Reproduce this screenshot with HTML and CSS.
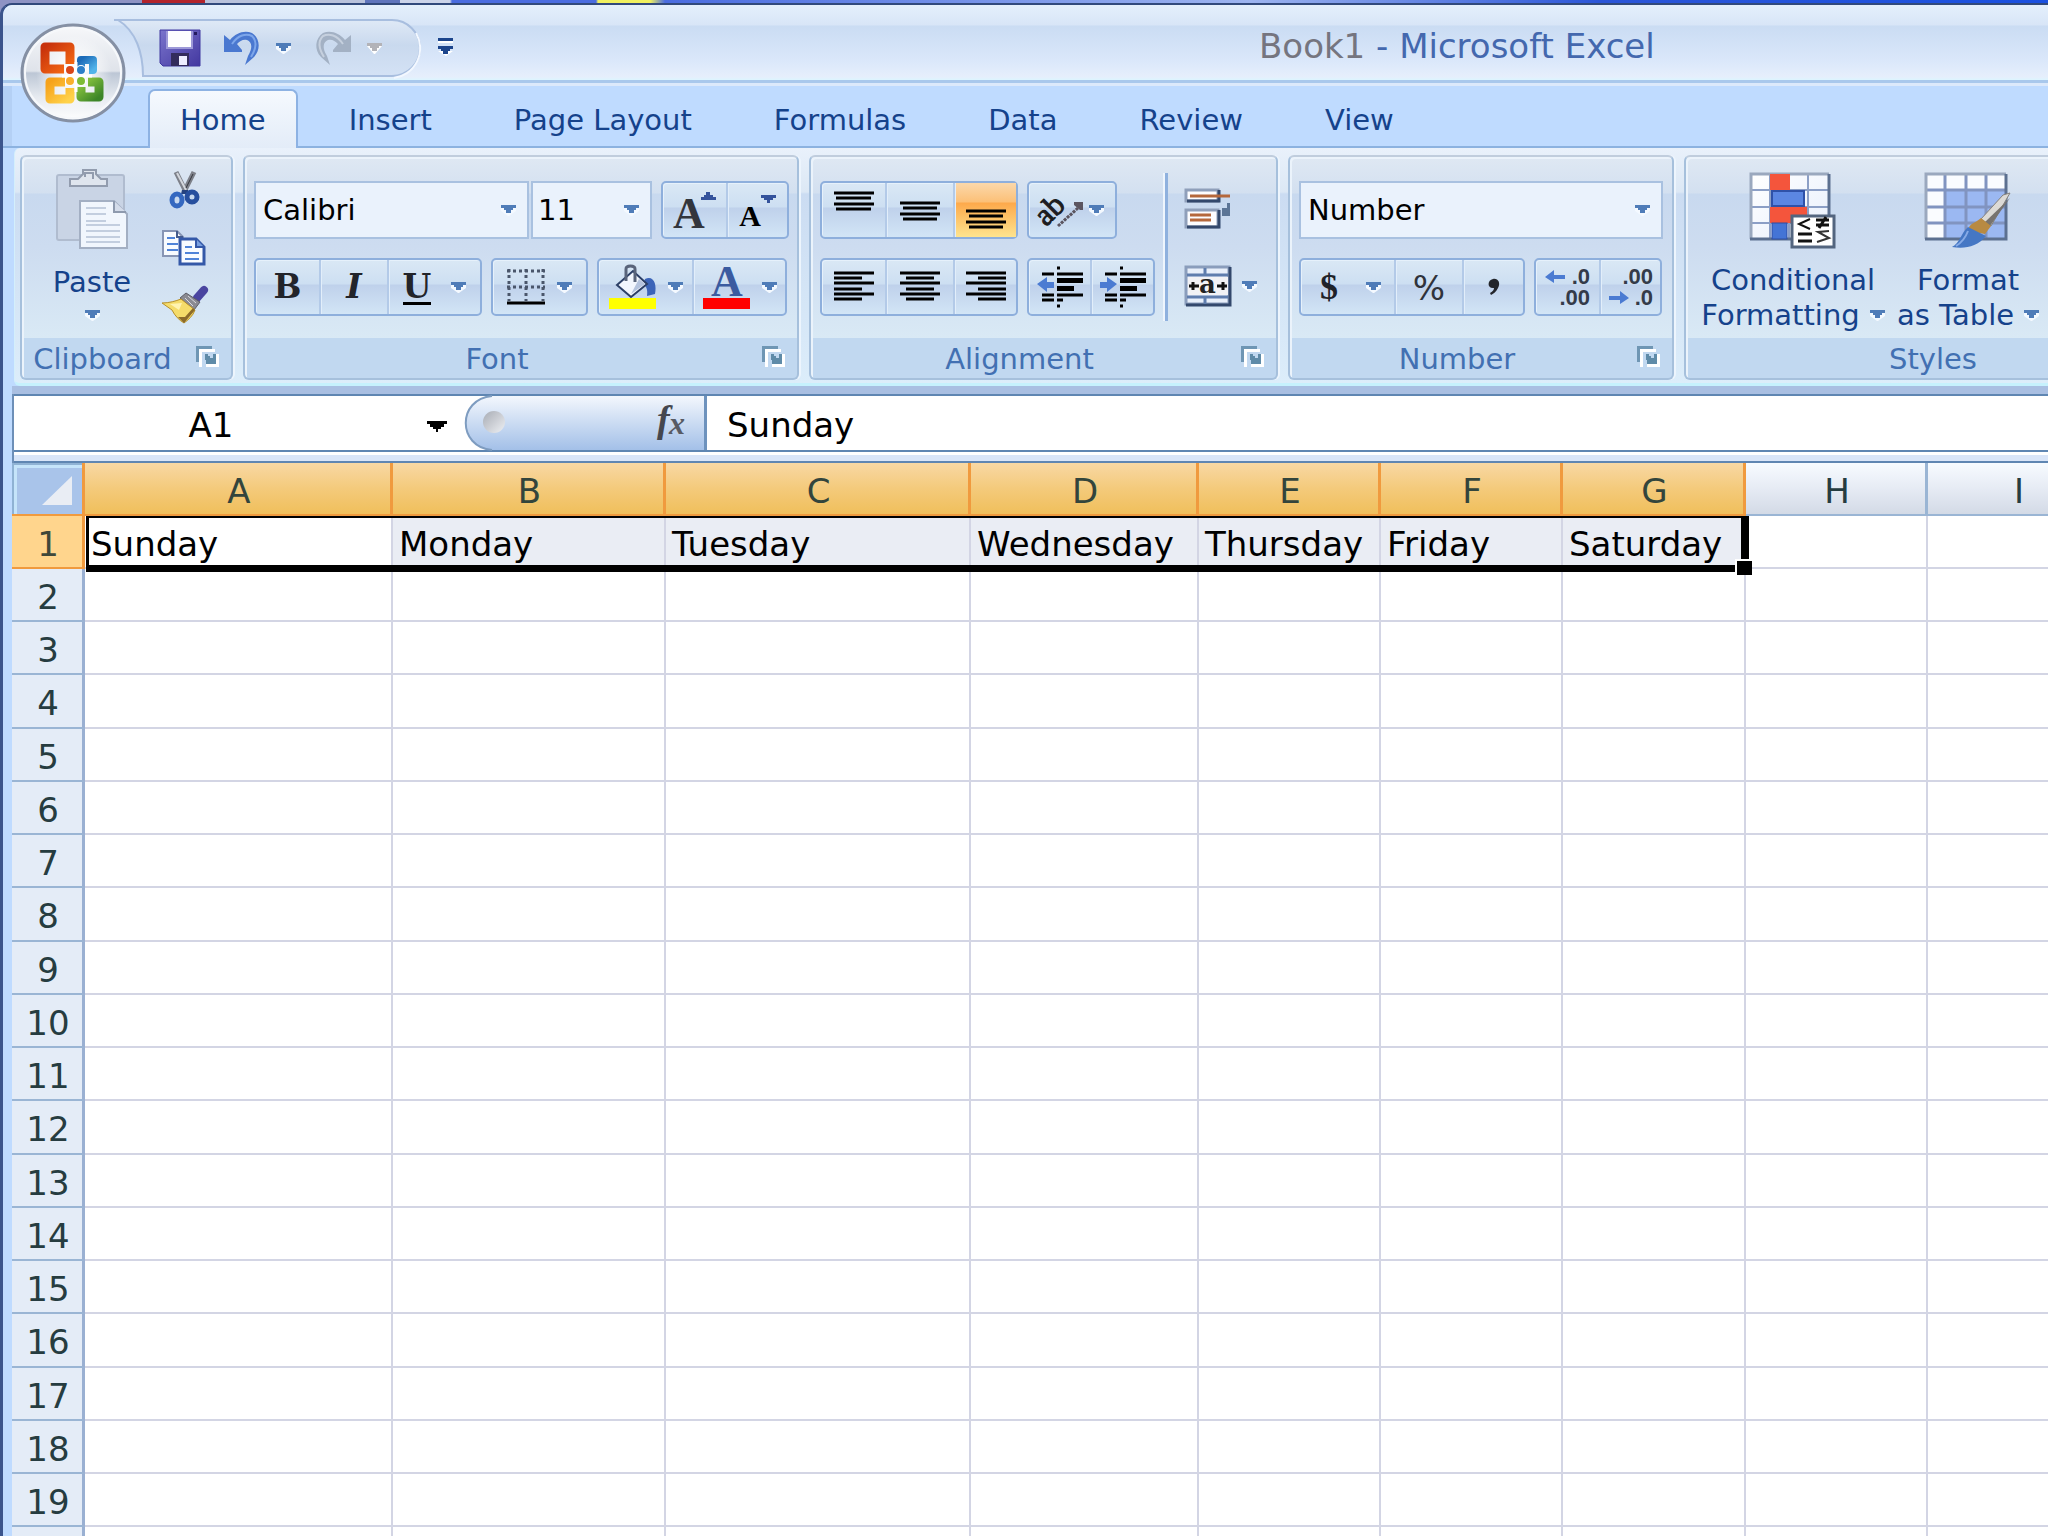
FILE: index.html
```html
<!DOCTYPE html>
<html lang="en">
<head>
<meta charset="utf-8">
<title>Book1 - Microsoft Excel</title>
<link rel="stylesheet" href="styles.css">
</head>
<body>
<svg class="defs" aria-hidden="true">
  <symbol id="caret" viewBox="0 0 15 11"><path d="M0 3H15V6L8 11H7L0 6Z" fill="#f4f9ff"/><path d="M0 0H15V3H12V5H10V8H5V5H3V3H0Z" fill="#4f7cb8"/></symbol>
  <symbol id="launcher" viewBox="0 0 23 21"><path d="M3 21V3H19V6H6V21Z" fill="#fff"/><path d="M0 0H16V3H3V16H0Z" fill="#6f96b4"/><path d="M20 8H23V21H10V18H20Z" fill="#fff"/><path d="M9 8H12V10H14V12H17V8H20V18H10V14H9Z" fill="#5f8ba8"/></symbol>
  <linearGradient id="orb" x2="0" y2="1"><stop offset="0" stop-color="#f7f8fa"/><stop offset=".48" stop-color="#dfe3ea"/><stop offset=".5" stop-color="#bcc6d5"/><stop offset=".75" stop-color="#e6eaf0"/><stop offset="1" stop-color="#fff"/></linearGradient>
  <radialGradient id="glow"><stop offset="0" stop-color="#fff"/><stop offset=".5" stop-color="#fff" stop-opacity=".7"/><stop offset="1" stop-color="#fff" stop-opacity="0"/></radialGradient>
  <linearGradient id="redG" x2="1" y2="1"><stop offset="0" stop-color="#c8320c"/><stop offset="1" stop-color="#f56a14"/></linearGradient>
  <linearGradient id="blueG" x2="1" y2="1"><stop offset="0" stop-color="#1c6bb8"/><stop offset="1" stop-color="#52b4ea"/></linearGradient>
  <linearGradient id="yelG" x2="1" y2="1"><stop offset="0" stop-color="#f6a21a"/><stop offset="1" stop-color="#ffd24a"/></linearGradient>
  <linearGradient id="greenG" x2="1" y2="1"><stop offset="0" stop-color="#8cc63f"/><stop offset="1" stop-color="#3c8527"/></linearGradient>
  <linearGradient id="qatG" x2="0" y2="1"><stop offset="0" stop-color="#dfe9f6"/><stop offset=".45" stop-color="#c9d9ee"/><stop offset="1" stop-color="#d4e2f5"/></linearGradient>
  <linearGradient id="saveG" x2="1" y2="1"><stop offset="0" stop-color="#7a74cc"/><stop offset="1" stop-color="#4338a0"/></linearGradient>
  <linearGradient id="cellG" x2="1" y2="1"><stop offset="0" stop-color="#fff"/><stop offset="1" stop-color="#e8effc"/></linearGradient>
  <linearGradient id="fxG" x2="0" y2="1"><stop offset="0" stop-color="#f3f7fd"/><stop offset="1" stop-color="#a3c0e8"/></linearGradient>
  <linearGradient id="knobG" x2="1" y2="1"><stop offset="0" stop-color="#a8acb4"/><stop offset="1" stop-color="#eef0f4"/></linearGradient>
</svg>

<div class="window">
  <header class="titlebar">
    <button class="office" aria-label="Office Button">
      <svg width="106" height="102" viewBox="0 0 106 102">
        <ellipse cx="53" cy="51" rx="51" ry="48" fill="url(#orb)" stroke="#8590a4" stroke-width="3"/>
        <ellipse cx="53" cy="51" rx="48" ry="45" fill="none" stroke="#f6f8fb" stroke-width="2"/>
        <circle cx="54" cy="52" r="38" fill="url(#glow)"/>
        <g fill="none" stroke-width="9" stroke-linejoin="round">
          <path d="M44 47H25V25H50V42" stroke="url(#redG)"/>
          <path d="M61 47V38H73V48H69" stroke="url(#blueG)" stroke-width="8"/>
          <path d="M50 66V77H30V60H45" stroke="url(#yelG)"/>
          <path d="M61 65V75H79V60H68" stroke="url(#greenG)"/>
        </g>
        <path d="M56 40V70M42 54H72" stroke="#fff" stroke-width="3"/>
        <circle cx="50" cy="48" r="5" fill="#fff"/><circle cx="61" cy="48" r="5" fill="#fff"/><circle cx="50" cy="59" r="5" fill="#fff"/><circle cx="61" cy="59" r="5" fill="#fff"/>
        <circle cx="50" cy="48" r="4" fill="#d8471a"/><circle cx="61" cy="48" r="4" fill="#2c7fc8"/><circle cx="50" cy="59" r="4" fill="#f9b02c"/><circle cx="61" cy="59" r="4" fill="#7dbb36"/>
      </svg>
    </button>
    <div class="qat">
      <svg class="qat-shape" width="308" height="60" viewBox="0 0 308 60"><path d="M2 1H280A28 28 0 0 1 280 57H31C31 34 24 12 6 1Z" fill="url(#qatG)" stroke="#a8bedf" stroke-width="2"/><path d="M282 59A30 30 0 0 0 304 14" fill="none" stroke="#f3f8ff" stroke-width="2"/></svg>
      <button aria-label="Save"><svg width="40" height="38" viewBox="0 0 40 38"><path d="M0 1H40V37H3L0 34Z" fill="url(#saveG)" stroke="#4038a0"/><rect x="6" y="2" width="27" height="18" fill="#9c98d8"/><rect x="8" y="2" width="23" height="16" fill="#fdfdff"/><rect x="11" y="24" width="18" height="13" fill="#332c5c"/><rect x="19" y="27" width="8" height="9" fill="#eef"/><rect x="34" y="3" width="3" height="3" fill="#241c60"/></svg></button>
      <button class="undo" aria-label="Undo"><svg width="36" height="34" viewBox="0 0 36 34"><path d="M0 4L6 9C12 2 20 -1 28 2C36 7 37 19 30 26L21 34L24 25C29 17 28 11 23 9C19 8 16 10 13 13L18 19V21H0Z" fill="#4a78d0"/><path d="M8 13C14 4 22 2 28 5C33 10 32 18 27 26" stroke="#7da6ea" stroke-width="2" fill="none"/></svg><svg width="15" height="11"><use href="#caret"/></svg></button>
      <button class="redo" aria-label="Redo"><svg width="36" height="34" viewBox="0 0 36 34"><path d="M36 4L30 9C24 2 16 -1 8 2C0 7 -1 19 6 26L15 34L12 25C7 17 8 11 13 9C17 8 20 10 23 13L18 19V21H36Z" fill="#a3b1c4"/><path d="M28 13C22 4 14 2 8 5C3 10 4 18 9 26" stroke="#c6d0de" stroke-width="2" fill="none"/></svg><svg width="15" height="11" viewBox="0 0 15 11"><path d="M0 3H15L8 11H7Z" fill="#fff"/><path d="M0 0H15V3H12V5H10V8H5V5H3V3H0Z" fill="#b3b3b8"/></svg></button>
    </div>
    <button class="customize" aria-label="Customize Quick Access Toolbar"><svg width="15" height="18" viewBox="0 0 15 18"><path d="M0 3H15V5H0ZM0 13H15L8 18Z" fill="#fff"/><path d="M0 0H15V3H0ZM0 8H15V11H12V13H10V16H5V13H3V11H0Z" fill="#1c458c"/></svg></button>
    <h1 class="title"><span>Book1</span> - Microsoft Excel</h1>
  </header>

  <nav class="tabs">
    <a href="#home" class="tab active">Home</a>
    <a href="#insert" class="tab">Insert</a>
    <a href="#layout" class="tab">Page Layout</a>
    <a href="#formulas" class="tab">Formulas</a>
    <a href="#data" class="tab">Data</a>
    <a href="#review" class="tab">Review</a>
    <a href="#view" class="tab">View</a>
  </nav>

  <div class="ribbon">
    <section class="group clipboard">
      <div class="body">
        <button class="big paste">
          <svg width="75" height="82" viewBox="0 0 75 82"><rect x="2" y="6" width="67" height="65" rx="2" fill="#c9d4e5" stroke="#b0bccf" stroke-width="2"/><path d="M15 10H23L28 5V1H41V5L46 10H52V17H15Z" fill="#dfe5ee" stroke="#929cae" stroke-width="2"/><path d="M30 8V4H38V10" fill="none" stroke="#929cae" stroke-width="2"/><path d="M25 32H59L72 45V79H25Z" fill="#f1f6fd" stroke="#a3afc3" stroke-width="2"/><path d="M59 32V43H71" fill="#d4dcea" stroke="#8e9aae" stroke-width="2"/><path d="M31 39H51M31 45H51M31 52H51M31 56H65M31 62H65M31 68H65M31 73H65" stroke="#c3cedf" stroke-width="2"/></svg>
          <span>Paste</span>
          <svg width="15" height="11"><use href="#caret"/></svg>
        </button>
        <div class="clip-tools">
          <button aria-label="Cut"><svg width="46" height="40" viewBox="0 0 46 40"><path d="M14 2L24 22M32 2L22 22" stroke="#7d8089" stroke-width="5"/><path d="M15 3L24 20" stroke="#d3d6dc" stroke-width="2"/><path d="M31 4L24 18" stroke="#34363c" stroke-width="1"/><path d="M20 20H26L27 24H19Z" fill="#25427f"/><ellipse cx="15" cy="30" rx="5" ry="6" fill="none" stroke="#3568c0" stroke-width="5"/><ellipse cx="30" cy="27" rx="5" ry="5" fill="none" stroke="#274f9e" stroke-width="5"/></svg></button>
          <button aria-label="Copy"><svg width="44" height="36" viewBox="0 0 44 36"><path d="M1 1H15L21 7V26H1Z" fill="#f8fbff" stroke="#8795b5" stroke-width="2"/><path d="M15 1V7H21" fill="none" stroke="#445b8c" stroke-width="2"/><path d="M5 8H13M5 14H16M5 20H16" stroke="#4f83d8" stroke-width="2"/><path d="M18 9H34L42 17V34H18Z" fill="#f8fbff" stroke="#3458a8" stroke-width="3"/><path d="M34 9V17H42" fill="#7aa0e0" stroke="#3458a8" stroke-width="2"/><path d="M23 17H30M23 23H37M23 29H37" stroke="#4f83d8" stroke-width="2"/></svg></button>
          <button aria-label="Format Painter"><svg width="46" height="38" viewBox="0 0 46 38"><path d="M35 12L42 4" stroke="#4a45a0" stroke-width="8" stroke-linecap="round"/><path d="M24 7L38 16L32 24L18 12Z" fill="#8a8a92" stroke="#5d5d66"/><path d="M26 10L34 17M23 12L31 20" stroke="#d9d9de"/><path d="M19 13L33 24C31 30 26 34 22 37C17 34 13 30 10 24L0 17C7 17 14 15 19 13Z" fill="#f5dc6a" stroke="#b78f28" stroke-width="1"/><path d="M16 31L22 37L33 24L31 22L23 31Z" fill="#8c6b2a"/><path d="M8 18L20 17L17 24Z" fill="#fff3b0"/></svg></button>
        </div>
      </div>
      <footer><span>Clipboard</span><button aria-label="Clipboard options"><svg width="23" height="21"><use href="#launcher"/></svg></button></footer>
    </section>

    <section class="group font">
      <div class="body rows">
        <div class="row">
          <div class="combos">
            <label class="combo family"><select aria-label="Font"><option>Calibri</option></select><svg width="15" height="11"><use href="#caret"/></svg></label>
            <label class="combo size"><select aria-label="Font size"><option>11</option></select><svg width="15" height="11"><use href="#caret"/></svg></label>
          </div>
          <div class="btns">
            <button class="m glyph-a" aria-label="Grow Font">A<svg width="15" height="8" viewBox="0 0 15 8"><path d="M0 8V5H3V3H5V0H9V3H12V5H15V8Z" fill="#34539c"/></svg></button>
            <button class="s glyph-a small" aria-label="Shrink Font">A<svg width="15" height="8" viewBox="0 0 15 8"><path d="M0 0H15V3H12V5H9V8H6V5H3V3H0Z" fill="#34539c"/></svg></button>
          </div>
        </div>
        <div class="row">
          <div class="btns">
            <button class="m glyph">B</button><button class="l glyph italic">I</button><button class="xl glyph"><u>U</u><svg width="15" height="11"><use href="#caret"/></svg></button>
          </div>
          <div class="btns">
            <button class="xl" aria-label="Borders"><svg width="38" height="36" viewBox="0 0 38 36"><path d="M0 2H38M0 18H38" stroke="#4a566b" stroke-width="3" stroke-dasharray="3 3"/><path d="M2 0V32M19 0V32M36 0V32" stroke="#4a566b" stroke-width="3" stroke-dasharray="3 3"/><path d="M0 34H38" stroke="#000" stroke-width="3"/></svg><svg width="15" height="11"><use href="#caret"/></svg></button>
          </div>
          <div class="btns">
            <button class="xl" aria-label="Fill Color"><svg width="47" height="44" viewBox="0 0 47 44"><rect y="33" width="47" height="11" fill="#ff0"/><path d="M36 14C45 10 48 20 46 29L38 31C39 24 37 20 34 20Z" fill="#3c64b8"/><path d="M8 20L24 6L38 19L22 32Z" fill="#f2f6fd" stroke="#2c3f66" stroke-width="2"/><path d="M22 29L36 19L30 14Z" fill="#b5c4de"/><path d="M17 16V4C17 0 26 0 26 4V17" fill="none" stroke="#59647a" stroke-width="3"/></svg><svg width="15" height="11"><use href="#caret"/></svg></button>
            <button class="xl" aria-label="Font Color"><svg width="47" height="44" viewBox="0 0 47 44"><text x="8" y="31" class="svg-a">A</text><rect y="33" width="47" height="11" fill="#f00"/></svg><svg width="15" height="11"><use href="#caret"/></svg></button>
          </div>
        </div>
      </div>
      <footer><span>Font</span><button aria-label="Font options"><svg width="23" height="21"><use href="#launcher"/></svg></button></footer>
    </section>

    <section class="group alignment">
      <div class="body">
        <div class="rows">
          <div class="row">
            <div class="btns">
              <button class="m" aria-label="Top Align"><svg width="40" height="40"><path d="M0 3H40M2 8H37M0 14H40M2 19H37"/></svg></button><button class="l" aria-label="Middle Align"><svg width="40" height="40"><path d="M0 13H40M3 18H37M0 24H40M3 29H37"/></svg></button><button class="m on" aria-label="Bottom Align"><svg width="40" height="40"><path d="M0 21H40M3 26H37M0 32H40M3 37H37"/></svg></button>
            </div>
            <div class="btns">
              <button class="orient" aria-label="Orientation"><svg width="44" height="38" viewBox="0 0 44 38"><text x="-4" y="28" transform="rotate(-45 11 20)" class="svg-ab">ab</text><path d="M18 35L38 17" stroke="#5b5560" stroke-width="3" stroke-dasharray="3 1"/><path d="M34 11H43V19H40L34 14Z" fill="#5b5560"/></svg><svg width="15" height="11"><use href="#caret"/></svg></button>
            </div>
          </div>
          <div class="row">
            <div class="btns">
              <button class="m" aria-label="Align Left"><svg width="40" height="40"><path d="M0 6H40M0 11H28M0 16H40M0 22H28M0 27H40M0 32H28"/></svg></button><button class="l" aria-label="Center"><svg width="40" height="40"><path d="M0 6H40M6 11H34M0 16H40M6 22H34M0 27H40M6 32H34"/></svg></button><button class="m" aria-label="Align Right"><svg width="40" height="40"><path d="M0 6H40M12 11H40M0 16H40M12 22H40M0 27H40M12 32H40"/></svg></button>
            </div>
            <div class="btns">
              <button class="s" aria-label="Decrease Indent"><svg width="46" height="42" viewBox="0 0 46 42"><path d="M20 2H23M5 8H17M20 8H46M5 29H17M20 29H46M5 34H17M20 34H26M20 40H23"/><path d="M20 12H46V17H20ZM20 20H37V25H20Z" fill="#000" stroke="none"/><path d="M0 18L10 11V16H17V22H10V26Z" fill="#4b7bd2" stroke="none"/></svg></button><button class="m" aria-label="Increase Indent"><svg width="46" height="42" viewBox="0 0 46 42"><path d="M20 2H23M5 8H17M20 8H46M5 29H17M20 29H46M5 34H17M20 34H26M20 40H23"/><path d="M20 12H46V17H20ZM20 20H37V25H20Z" fill="#000" stroke="none"/><path d="M17 18L7 11V16H0V22H7V26Z" fill="#4b7bd2" stroke="none"/></svg></button>
            </div>
          </div>
        </div>
        <div class="cells-tools">
          <button aria-label="Wrap Text"><svg width="46" height="40" viewBox="0 0 46 40"><path d="M1 1H33V12H1Z" fill="#fdfdff" stroke="#8f9fba" stroke-width="3"/><path d="M2 12H34V1" fill="none" stroke="#33486c" stroke-width="3"/><path d="M5 7H45" stroke="#b5683c" stroke-width="3"/><path d="M1 21H33V38H1Z" fill="#fdfdff" stroke="#8f9fba" stroke-width="3"/><path d="M2 38H34V21" fill="none" stroke="#33486c" stroke-width="3"/><path d="M5 26H26M5 31H26" stroke="#b5683c" stroke-width="3"/><path d="M42 14H45V27H37V19H42Z" fill="#5c7596"/></svg></button>
          <button aria-label="Merge and Center"><svg width="46" height="40" viewBox="0 0 46 40"><path d="M1 1H44V38H1Z" fill="#e8effa" stroke="#8a9dbc" stroke-width="3"/><path d="M1 39H45V1" fill="none" stroke="#33486c" stroke-width="3"/><path d="M2 9H43M2 31H43M20 2V9M20 31V38" stroke="#5f7dad" stroke-width="3"/><path d="M3 11H43V29H3Z" fill="#f2f2f5"/><path d="M4 20H14M8 16V24M32 20H42M38 16V24" stroke="#111" stroke-width="3"/><text x="14" y="27" class="svg-merge">a</text></svg><svg width="15" height="11"><use href="#caret"/></svg></button>
        </div>
      </div>
      <footer><span>Alignment</span><button aria-label="Alignment options"><svg width="23" height="21"><use href="#launcher"/></svg></button></footer>
    </section>

    <section class="group number">
      <div class="body rows">
        <div class="row"><label class="combo format"><select aria-label="Number format"><option>Number</option></select><svg width="15" height="11"><use href="#caret"/></svg></label></div>
        <div class="row">
          <div class="btns">
            <button class="xl dollar">$<svg width="15" height="11"><use href="#caret"/></svg></button><button class="l percent">%</button><button class="s" aria-label="Comma Style"><svg width="12" height="18" viewBox="0 0 12 18"><path d="M5 1C10 0 13 5 10 10C8 14 5 16 3 17L2 15C5 13 6 12 6 10C-1 11 -1 2 5 1Z" fill="#23252b"/></svg></button>
          </div>
          <div class="btns">
            <button class="m" aria-label="Increase Decimal"><svg width="46" height="48" viewBox="0 0 46 48"><path d="M0 14L9 7V12H20V16H9V20Z" fill="#4b7bd2"/><text x="45" y="21" class="svg-dec">.0</text><text x="45" y="42" class="svg-dec">.00</text></svg></button><button class="s" aria-label="Decrease Decimal"><svg width="46" height="48" viewBox="0 0 46 48"><path d="M21 35L12 28V33H1V37H12V41Z" fill="#4b7bd2"/><text x="45" y="21" class="svg-dec">.00</text><text x="45" y="42" class="svg-dec">.0</text></svg></button>
          </div>
        </div>
      </div>
      <footer><span>Number</span><button aria-label="Number options"><svg width="23" height="21"><use href="#launcher"/></svg></button></footer>
    </section>

    <section class="group styles">
      <div class="body">
        <button class="big cond">
          <svg width="86" height="76" viewBox="0 0 86 76"><rect x="1" y="1" width="77" height="65" fill="url(#cellG)"/><path d="M0 17H79M0 34H79M0 50H79M20 0V66M39 0V66M58 0V66" stroke="#8c9fc6" stroke-width="2"/><path d="M1 66V1H79" fill="none" stroke="#9aa8be" stroke-width="3"/><path d="M0 66H79V1" fill="none" stroke="#5c7090" stroke-width="3"/><rect x="20" y="1" width="20" height="16" fill="#f4553c"/><rect x="22" y="18" width="32" height="15" fill="#5b86e2" stroke="#2f51a8" stroke-width="2"/><rect x="20" y="34" width="37" height="16" fill="#f4553c"/><rect x="22" y="50" width="15" height="16" fill="#4474d6" stroke="#2c4da2" stroke-width="1"/><rect x="42" y="43" width="42" height="31" fill="#fff" stroke="#53657f" stroke-width="3"/><path d="M60 46L49 51L60 56" fill="none" stroke="#111" stroke-width="2"/><path d="M48 61H62M48 68H62M66 47H79M66 52H79M76 44L69 55" stroke="#111" stroke-width="3"/><path d="M79 58L68 59L79 65L67 69" fill="none" stroke="#333" stroke-width="2"/></svg>
          <span>Conditional</span><span class="last">Formatting<svg width="15" height="11"><use href="#caret"/></svg></span>
        </button>
        <button class="big tbl">
          <svg width="86" height="76" viewBox="0 0 86 76"><rect x="1" y="1" width="80" height="65" fill="#fafcff"/><rect x="20" y="17" width="61" height="49" fill="#9bb8f2"/><path d="M0 17H81M0 34H81M0 50H81M20 0V66M41 0V66M61 0V66" stroke="#8194c0" stroke-width="3"/><path d="M1 66V1H81" fill="none" stroke="#9aa8be" stroke-width="3"/><path d="M0 66H81V1" fill="none" stroke="#5c7090" stroke-width="3"/><path d="M85 20L66 53L56 46L78 22Z" fill="#dcdad6" stroke="#85817c" stroke-width="1"/><path d="M85 25L65 53L60 49Z" fill="#77736f"/><path d="M56 45L66 53L60 61L43 58C44 50 49 51 56 45Z" fill="#b88a42"/><path d="M43 54L61 63C52 74 40 76 27 74C35 70 36 60 43 54Z" fill="#4577c4"/><path d="M43 58C40 66 36 70 31 73" stroke="#86aae6" stroke-width="2" fill="none"/></svg>
          <span>Format</span><span class="last">as Table<svg width="15" height="11"><use href="#caret"/></svg></span>
        </button>
      </div>
      <footer><span>Styles</span></footer>
    </section>
  </div>

  <div class="formula-bar">
    <input class="name-box" aria-label="Name Box" value="A1">
    <button class="name-drop" aria-label="Named cells"><svg width="20" height="11" viewBox="0 0 20 11"><path d="M0 0H20V3H17V6H14V8H11V11H9V8H6V6H3V3H0Z"/></svg></button>
    <button class="fx" aria-label="Insert Function"><svg width="240" height="54" viewBox="0 0 240 54"><path d="M240 0H27C-8 3 -8 51 27 54H240Z" fill="url(#fxG)"/><path d="M27 0C-8 3 -8 51 27 54" fill="none" stroke="#7e9cc0" stroke-width="2"/><circle cx="29" cy="26" r="11" fill="url(#knobG)"/><text x="192" y="36" class="svg-f">f</text><text x="204" y="38" class="svg-x">x</text></svg></button>
    <input class="formula" aria-label="Formula" value="Sunday">
  </div>

  <main class="sheet">
    <table>
      <colgroup><col class="c-head"><col class="c-a"><col class="c-b"><col class="c-c"><col class="c-d"><col class="c-e"><col class="c-e"><col class="c-g"><col class="c-e"><col class="c-e"></colgroup>
      <thead><tr><th class="corner"><button aria-label="Select All"><svg width="30" height="29" viewBox="0 0 30 29"><path d="M30 0V29H0Z" fill="#e9edf4"/></svg></button></th><th class="sel">A</th><th class="sel">B</th><th class="sel">C</th><th class="sel">D</th><th class="sel">E</th><th class="sel">F</th><th class="sel">G</th><th>H</th><th>I</th></tr></thead>
      <tbody>
        <tr class="picked"><th>1</th><td>Sunday</td><td>Monday</td><td>Tuesday</td><td>Wednesday</td><td>Thursday</td><td>Friday</td><td>Saturday</td><td></td><td></td></tr>
        <tr><th>2</th><td></td><td></td><td></td><td></td><td></td><td></td><td></td><td></td><td></td></tr>
        <tr><th>3</th><td></td><td></td><td></td><td></td><td></td><td></td><td></td><td></td><td></td></tr>
        <tr><th>4</th><td></td><td></td><td></td><td></td><td></td><td></td><td></td><td></td><td></td></tr>
        <tr><th>5</th><td></td><td></td><td></td><td></td><td></td><td></td><td></td><td></td><td></td></tr>
        <tr><th>6</th><td></td><td></td><td></td><td></td><td></td><td></td><td></td><td></td><td></td></tr>
        <tr><th>7</th><td></td><td></td><td></td><td></td><td></td><td></td><td></td><td></td><td></td></tr>
        <tr><th>8</th><td></td><td></td><td></td><td></td><td></td><td></td><td></td><td></td><td></td></tr>
        <tr><th>9</th><td></td><td></td><td></td><td></td><td></td><td></td><td></td><td></td><td></td></tr>
        <tr><th>10</th><td></td><td></td><td></td><td></td><td></td><td></td><td></td><td></td><td></td></tr>
        <tr><th>11</th><td></td><td></td><td></td><td></td><td></td><td></td><td></td><td></td><td></td></tr>
        <tr><th>12</th><td></td><td></td><td></td><td></td><td></td><td></td><td></td><td></td><td></td></tr>
        <tr><th>13</th><td></td><td></td><td></td><td></td><td></td><td></td><td></td><td></td><td></td></tr>
        <tr><th>14</th><td></td><td></td><td></td><td></td><td></td><td></td><td></td><td></td><td></td></tr>
        <tr><th>15</th><td></td><td></td><td></td><td></td><td></td><td></td><td></td><td></td><td></td></tr>
        <tr><th>16</th><td></td><td></td><td></td><td></td><td></td><td></td><td></td><td></td><td></td></tr>
        <tr><th>17</th><td></td><td></td><td></td><td></td><td></td><td></td><td></td><td></td><td></td></tr>
        <tr><th>18</th><td></td><td></td><td></td><td></td><td></td><td></td><td></td><td></td><td></td></tr>
        <tr><th>19</th><td></td><td></td><td></td><td></td><td></td><td></td><td></td><td></td><td></td></tr>
        <tr><th></th><td></td><td></td><td></td><td></td><td></td><td></td><td></td><td></td><td></td></tr>
      </tbody>
    </table>
    <div class="selection"><i></i></div>
  </main>
</div>
</body>
</html>
```
FILE: styles.css
```css
* { box-sizing: border-box; }
body {
  margin: 0;
  height: 100vh;
  overflow: hidden;
  padding-top: 3px;
  background: linear-gradient(90deg, #8e93c4 0 142px, #b3242c 142px 205px, #b9c2dc 205px 365px, #5f74bc 365px 400px, #ccd4ea 400px 450px, #4a6ce0 452px 596px, #f0f060 598px 650px, #4a6ce0 665px, #9db4f0 1250px, #2b55d8 1600px, #1a50e0);
  font-family: "DejaVu Sans", Verdana, sans-serif;
  font-size: 29px;
  line-height: 35px;
  color: #15428b;
}
button, select, input { font: inherit; color: inherit; }
button { border: 0; padding: 0; background: none; display: flex; align-items: center; justify-content: center; }
svg { display: block; flex: none; overflow: visible; }
.defs { position: absolute; width: 0; height: 0; }
.window {
  height: 100%;
  overflow: hidden;
  position: relative;
  border-top: 2px solid #31497c;
  border-left: 3px solid #3b548c;
  border-top-left-radius: 12px;
  background: #bfdbff;
}

/* Title bar */
.titlebar {
  display: flex;
  align-items: flex-start;
  height: 81px;
  padding-left: 109px;
  background: linear-gradient(#e4effc, #d8e5f7 20px, #cadcf3 21px, #dae7fa 55px, #e6effc 72px, #dcf5ff 75px, #a9c8ec 75px 78px, #dce9fb 78px);
}
.office { position: absolute; left: 17px; top: 17px; z-index: 2; }
.qat { position: relative; display: flex; align-items: center; width: 308px; height: 60px; margin-top: 14px; padding: 0 0 2px 48px; }
.qat > * { position: relative; }
.qat .qat-shape { position: absolute; left: 0; top: 0; }
.undo, .redo { gap: 16px; margin-left: 24px; }
.customize { margin: 33px 0 0 18px; }
.title { margin: 20px 0 0 806px; font-size: 34px; line-height: 42px; font-weight: 400; color: #4468ae; white-space: nowrap; }
.title span { color: #75757f; }

/* Tabs */
.tabs { display: flex; gap: 20px; height: 62px; padding: 3px 0 0 145px; box-shadow: inset 0 -2px #8cb2e0, inset 9px 0 #b4d0f5; }
.tab { padding: 14px 31px 0; color: #15428b; text-decoration: none; white-space: nowrap; }
.tab.active { padding: 12px 30px 0; border: 2px solid #8db2e3; border-bottom: 0; border-radius: 7px 7px 0 0; background: linear-gradient(#f5f9fe, #e3ecf8); }

/* Ribbon */
.ribbon {
  display: flex;
  gap: 10px;
  height: 238px;
  margin-left: 11px;
  padding: 7px 0 0 6px;
  border-bottom: 3px solid #c6f1fd;
  border-left: 1px solid #d4effc;
  border-radius: 6px 0 0 6px;
  background: linear-gradient(#e9f1fb, #dce8f5 44px, #cbdcf2 46px, #dcedfa);
}
.group {
  flex: none;
  height: 225px;
  border: 2px solid #a6c0dc;
  border-top-color: #c0cddd;
  border-radius: 6px;
  box-shadow: inset 2px 2px #ebf3fb, 2px 0 #edf5fd;
  background: linear-gradient(#dfe8f3, #d3e0f0 36px, #c8d9ef 37px, #cddcf0 90px, #d9e9f5 181px, #c1d8f0 181px);
}
.clipboard { width: 213px; margin-left: -1px; }
.font { width: 556px; }
.alignment { width: 469px; }
.number { width: 386px; }
.styles { width: 498px; }
.body { display: flex; height: 181px; padding-left: 9px; }
.group footer { display: flex; align-items: center; height: 40px; color: #4270b2; }
.group footer span { flex: 1; text-align: center; padding-top: 2px; }
.group footer button { width: 48px; height: 34px; padding-bottom: 4px; }
.big { flex-direction: column; justify-content: flex-start; }
.last { display: flex; align-items: center; gap: 10px; }
.paste { width: 122px; padding: 12px 0 0; }
.paste span { margin: 11px 0 10px; }
.clip-tools { display: flex; flex-direction: column; align-items: flex-start; gap: 20px; padding: 13px 0 0 9px; }
.rows { display: flex; flex-direction: column; gap: 19px; padding-top: 24px; }
.row { display: flex; gap: 9px; }
.combos { display: flex; gap: 2px; }
.combo { display: grid; grid-template-columns: 1fr 26px; align-items: center; height: 58px; border: 2px solid #a9c1e0; background: #eaf2fc; color: #000; }
.combo select { grid-area: 1 / 1 / 2 / 3; appearance: none; height: 54px; padding: 0 0 0 7px; border: 0; background: none; }
.combo svg { grid-area: 1 / 2; }
.family { width: 275px; }
.size { width: 121px; }
.size select { padding-left: 5px; }
.format { width: 364px; }
.btns {
  display: flex;
  height: 58px;
  border: 2px solid #8eafdc;
  border-radius: 5px;
  box-shadow: inset 1px 1px #e6f1fb;
  background: linear-gradient(#dae8f5, #cddff2 24px, #bfd1eb 25px, #d2e5f6);
}
.btns button + button { border-left: 2px solid #b3cae8; box-shadow: inset 1px 0 #e2eefa; }
.s { width: 61px; }
.m { width: 63px; }
.l { width: 68px; }
.xl { width: 93px; gap: 12px; }
.orient { width: 86px; gap: 5px; }
.btns .on { background: linear-gradient(#fbd8ab, #fcc077 19px, #fda94b 20px, #fee48e); }
.glyph { font: bold 33px "DejaVu Serif", serif; color: #22242a; padding-bottom: 2px; }
.italic { font-style: italic; }
.glyph.xl { gap: 20px; }
.glyph u { text-decoration: none; line-height: 30px; border-bottom: 3px solid #000; margin-top: 5px; }
.glyph svg { margin-top: 3px; }
.glyph-a { font: bold 44px/50px "Liberation Serif", serif; color: #33363d; padding-top: 8px; }
.glyph-a svg { margin: -36px 0 0 -4px; }
.glyph-a.small { font-size: 30px; padding-top: 12px; color: #000; }
.glyph-a.small svg { margin: -34px 0 0 0; }
.svg-a { font: bold 44px "Liberation Serif", serif; fill: #3b5ba0; }
.svg-ab { font: 31px "Liberation Serif", serif; fill: #1c1c20; }
.svg-merge { font: bold 26px "DejaVu Serif", serif; fill: #222; }
.svg-dec { font: bold 22px/1 "Liberation Sans", sans-serif; fill: #343b49; text-anchor: end; }
.svg-f { font: italic bold 38px "Liberation Serif", serif; fill: #45474f; }
.svg-x { font: italic bold 32px "Liberation Serif", serif; fill: #585b64; }
.alignment .btns path { stroke-width: 3; }
.alignment .btns button:not(.orient) svg { stroke: #000; }
.alignment .btns .svg-ab { stroke: #1c1c20; stroke-width: 1; }
.cells-tools { display: flex; flex-direction: column; align-items: flex-start; gap: 37px; height: 148px; margin: 16px 0 0 10px; padding: 16px 0 0 17px; border-left: 3px solid #8fb1de; box-shadow: -2px 0 #eef5fd; }
.cells-tools button { gap: 11px; }
.dollar { font: bold 36px "Liberation Serif", serif; color: #1f2229; gap: 28px; padding-left: 6px; }
.percent { font-size: 34px; color: #30333b; padding-top: 2px; }
.cond { width: 190px; padding: 16px 0 0; margin-left: 3px; }
.tbl { width: 150px; padding: 16px 0 0; margin-left: 5px; }
.big > svg + span { margin-top: 14px; }

/* Formula bar */
.formula-bar {
  display: flex;
  height: 77px;
  margin-left: 9px;
  padding-left: 2px;
  border-top: 8px solid #a9bfe2;
  background: linear-gradient(#5f86b2 2px, #fff 2px 56px, #5f86b2 56px 58px, #fff 58px 61px, #d9e5f8 61px 67px, #5f86b2 67px);
  box-shadow: inset 2px 0 #6d8fb8;
  color: #000;
  font-size: 34px;
}
.formula-bar > * { height: 54px; margin-top: 2px; border: 0; background: none; }
.formula-bar input { padding: 3px 0 0; }
.name-box { width: 394px; text-align: center; }
.name-drop { width: 58px; padding-top: 6px; }
.fx { width: 238px; }
.formula-bar .formula { flex: 1; min-width: 0; padding-left: 20px; border-left: 3px solid #6d92bd; }

/* Worksheet */
.sheet { position: relative; margin-left: 9px; background: #fff; color: #000; font-size: 34px; line-height: 40px; }
.sheet table { width: 2098px; table-layout: fixed; border-spacing: 0; }
.c-head { width: 73px; }
.c-a { width: 308px; }
.c-b { width: 273px; }
.c-c { width: 305px; }
.c-d { width: 228px; }
.c-e { width: 182px; }
.c-g { width: 183px; }
.sheet th, .sheet td { padding: 4px 0 0; font-weight: 400; white-space: nowrap; }
.sheet thead th { height: 53px; padding-left: 3px; border-right: 3px solid #9ab5d4; border-bottom: 2px solid #9ab5d4; background: linear-gradient(#f7fbff, #e6ebf4 50%, #d3dae6); color: #263c40; }
.sheet thead th.sel { border-color: #f09a3e; background: linear-gradient(#f8d8a4, #f4ca7b 50%, #f0bf5b); color: #33453c; }
.sheet thead .corner { padding: 0; border-color: #f09a3e; background: #a9c4ea; box-shadow: inset 2px 2px #8fb2d4, inset 5px 5px #c5e4fa; }
.corner button { width: 60px; height: 51px; justify-content: flex-end; padding-top: 4px; }
tbody tr { height: 53px; }
tbody tr:nth-child(4n) { height: 54px; }
.sheet tbody th { padding-left: 2px; border-right: 3px solid #9ab0d2; border-bottom: 2px solid #9ab5d4; background: #e4ecf7; color: #263c40; }
tbody td { border-right: 2px solid #d3d5e4; border-bottom: 2px solid #d3d5e4; background: #fff; }
.sheet .picked th { border-color: #f09a3e; background: #ffd58d; color: #40483a; }
.sheet .picked td { padding-left: 6px; background: #eaedf4; }
.sheet .picked td:nth-child(2), .sheet .picked td:nth-child(n + 9) { background: #fff; }
.selection { position: absolute; left: 74px; top: 53px; width: 1663px; height: 56px; border: 3px solid #000; border-width: 2px 8px 7px 3px; }
.selection i { position: absolute; right: -11px; bottom: -10px; width: 17px; height: 16px; border: solid #fff; border-width: 2px 0 0 2px; background: #000; }
```
